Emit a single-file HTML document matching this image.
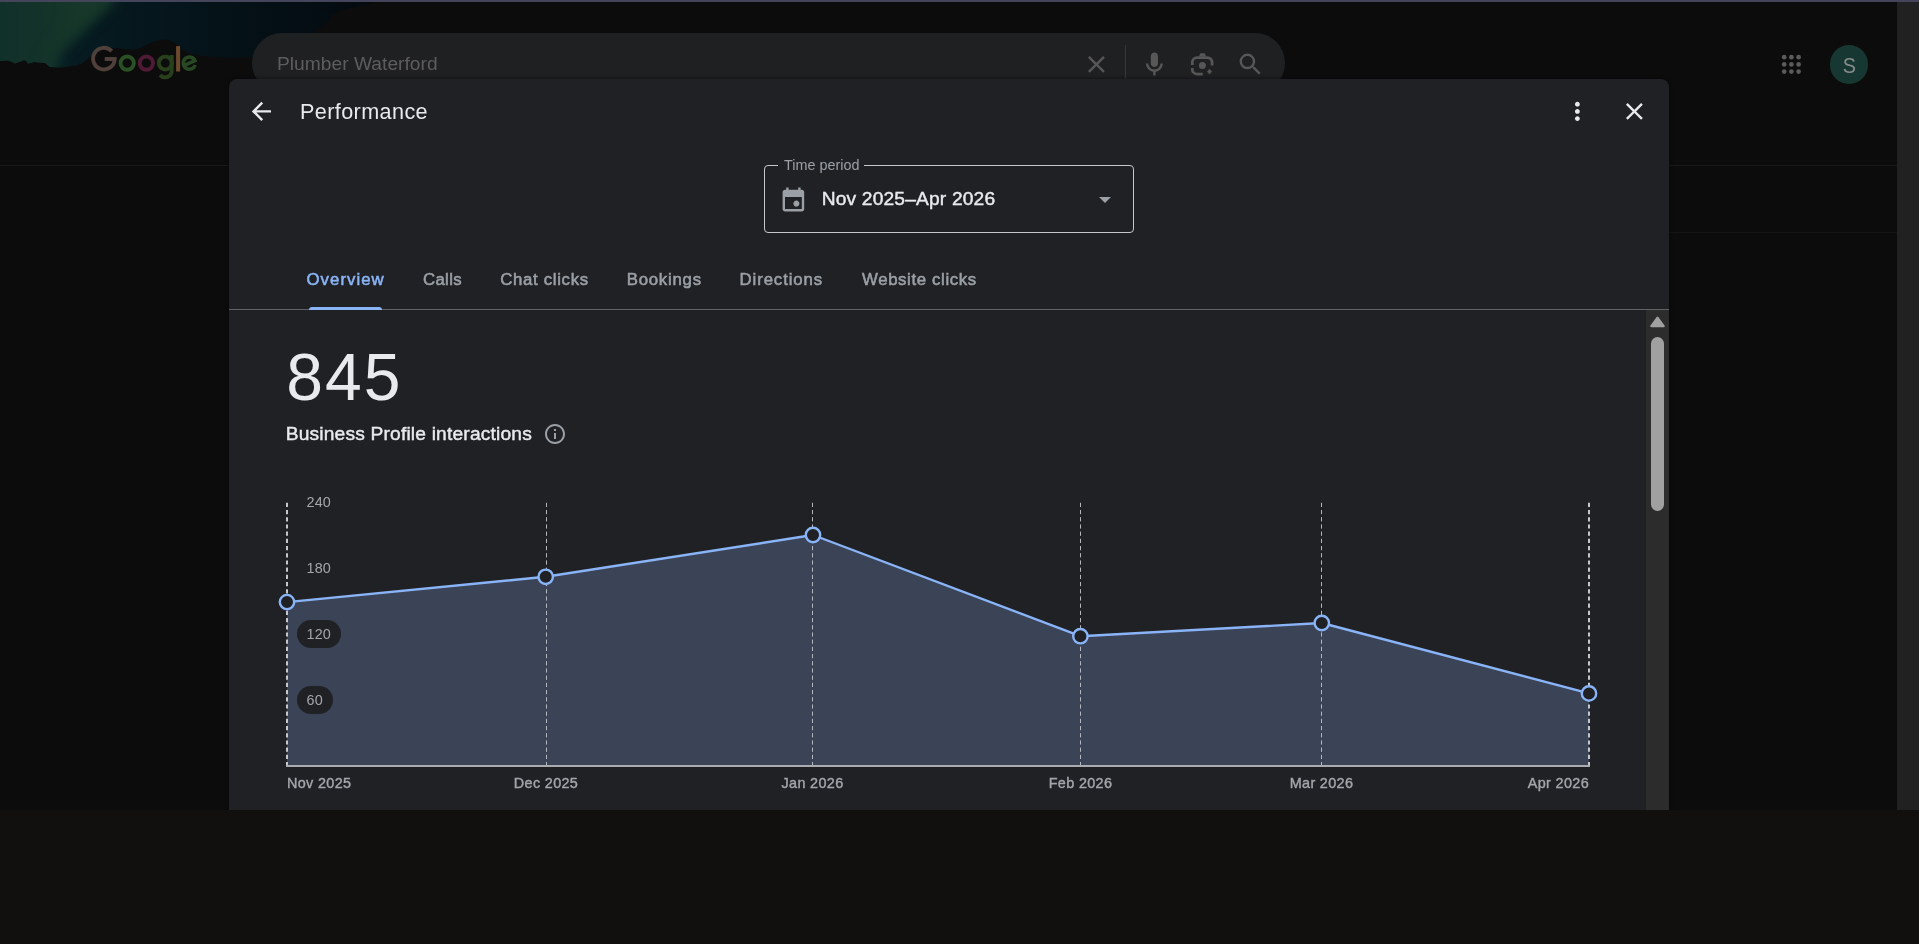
<!DOCTYPE html>
<html>
<head>
<meta charset="utf-8">
<title>Performance</title>
<style>
*{box-sizing:border-box;margin:0;padding:0}
html,body{width:1919px;height:944px;overflow:hidden;background:#0c0c0c;font-family:"Liberation Sans",sans-serif;}
.abs{position:absolute}
#page{will-change:transform;position:absolute;left:0;top:0;width:1919px;height:944px;overflow:hidden;background:#0c0c0c}
#topline{left:0;top:0;width:1919px;height:2px;background:#44455a}
#bottom{z-index:5;left:0;top:810px;width:1919px;height:134px;background:#11100e}
#vscroll{left:1897px;top:2px;width:22px;height:808px;background:#212121}
.hline{height:1px;background:#191919}
#search{left:252px;top:33px;width:1033px;height:60px;border-radius:30px;background:#1f2022}
#stext{left:277px;letter-spacing:0.020px;top:51.600px;font-size:19.200px;line-height:24px;color:#5d5d5d;white-space:nowrap}
#sdiv{left:1125px;top:45px;width:1px;height:35px;background:#37383b}
#avatar{left:1829.800px;top:45.200px;width:38.400px;height:38.400px;border-radius:50%;background:#173832;color:#868b89;font-size:22px;line-height:41px;text-align:center;transform-origin:50% 50%}
#modal{left:229px;top:79px;width:1440px;height:731px;background:#202124;border-radius:8px 8px 0 0;overflow:hidden;box-shadow:0 0 4px rgba(0,0,0,0.550)}
#title{left:71px;letter-spacing:0.400px;top:20px;font-size:21.600px;line-height:26px;color:#e8eaed;white-space:nowrap}
#tp{left:535px;top:86px;width:370px;height:68px;border:1px solid #c4c7cc;border-radius:4px}
#tplabel{left:549px;top:77.500px;padding:0 5px 0 6px;background:#202124;font-size:14.400px;line-height:16px;letter-spacing:0;color:#9aa0a6;white-space:nowrap}
#tptext{left:592.700px;top:107.500px;font-size:19.200px;line-height:24px;color:#e8eaed;-webkit-text-stroke:0.450px #e8eaed;letter-spacing:0.170px;white-space:nowrap}
.tab{top:191px;font-size:16.800px;line-height:20px;color:#9aa0a6;-webkit-text-stroke:0.550px #9aa0a6;white-space:nowrap}
#tabline{left:0;top:230px;width:1440px;height:1px;background:#5f6368}
#tabind{left:79.700px;top:228px;width:73.400px;height:3px;background:#8ab4f8;border-radius:3px 3px 0 0}
#mtrack{left:1417px;top:231px;width:23px;height:500px;background:#2c2c2c}
#mthumb{left:1422px;top:258px;width:13px;height:174px;border-radius:6.5px;background:#a0a0a0}
#big{left:57.300px;letter-spacing:2px;top:262px;font-size:66px;line-height:72px;color:#e8eaed;white-space:nowrap}
#bpi{left:56.700px;letter-spacing:0.180px;top:343px;font-size:19.200px;line-height:24px;color:#e8eaed;-webkit-text-stroke:0.450px #e8eaed;white-space:nowrap}
svg{position:absolute;overflow:visible}
</style>
</head>
<body>
<div id="page">
  <!-- aurora doodle background (top-left) -->
  <svg id="aurora" class="abs" style="left:0;top:2px" width="380" height="80" viewBox="0 2 380 80">
    <defs>
      <linearGradient id="navy" gradientUnits="userSpaceOnUse" x1="40" y1="0" x2="380" y2="0">
        <stop offset="0" stop-color="#082026"/>
        <stop offset="0.12" stop-color="#061b21"/>
        <stop offset="0.35" stop-color="#05161c"/>
        <stop offset="0.65" stop-color="#041016"/>
        <stop offset="0.88" stop-color="#040c11"/>
        <stop offset="1" stop-color="#05090c"/>
      </linearGradient>
      <linearGradient id="grn" gradientUnits="userSpaceOnUse" x1="0" y1="0" x2="110" y2="0">
        <stop offset="0" stop-color="#10302a"/>
        <stop offset="0.45" stop-color="#14342a"/>
        <stop offset="1" stop-color="#18392b"/>
      </linearGradient>
      <filter id="bl" color-interpolation-filters="sRGB" filterUnits="userSpaceOnUse" x="-60" y="-60" width="520" height="220"><feGaussianBlur stdDeviation="6"/></filter>
      <filter id="bl2" color-interpolation-filters="sRGB" filterUnits="userSpaceOnUse" x="-60" y="-60" width="520" height="220"><feGaussianBlur stdDeviation="7"/></filter>
      <clipPath id="skyclip"><polygon points="0,2 378,2 365,5 354,7.500 343,10 333,14.500 329,20 325,25 318,29 312.500,33.500 303,39 291.700,45 281,49 271,52 260,55.500 250,57.300 244,57 234,58 223.600,57.600 212,56.500 200.500,55.600 193,54 187,52.200 181,47.500 176,43.400 170,40.500 165.300,39.300 158,40.500 149,43.400 142,47.500 135.500,49.500 126,49.200 116.500,48 106,49 98,51.500 91.500,55 87.700,59 82,63.300 76,65.500 68,66.800 61,67.500 49.600,67 47,64.500 45,63 39,62.500 34,62 31,63 28,63.500 26,61 24.400,60 20,61.800 15,63.400 11,61.500 7.600,60.500 3,61 0,61"/></clipPath>
    </defs>
    <g clip-path="url(#skyclip)">
      <rect x="0" y="0" width="380" height="82" fill="url(#navy)"/>
      <polygon points="-30,-30 115,-30 115,2 96,20 75,40 60,55 57,70 57,100 -30,100" fill="url(#grn)" filter="url(#bl)"/>
      <polygon points="70,-10 108,-10 100,8 86,22 66,42 53,57 50,75 38,75 42,57 52,40 66,20" fill="#1b3d2c" opacity="0.250" filter="url(#bl2)"/>
    </g>
  </svg>
  <div id="topline" class="abs"></div>
  <div class="abs hline" style="left:0;top:165px;width:1897px"></div>
  <div class="abs hline" style="left:1669px;top:232px;width:228px;background:#151515"></div>
  <div id="vscroll" class="abs"></div>
  <div id="bottom" class="abs"></div>

  <!-- Google logo -->
  <svg id="logo" class="abs" style="left:0;top:0" width="260" height="100" viewBox="0 0 260 100" fill="none" stroke-width="3.900"><path d="M111.70 51.06 A10.85 10.85 0 1 0 114.75 59.00 H104.70" stroke="#4f403b" /><circle cx="127.200" cy="63.100" r="6.650" stroke="#2a5026"/><circle cx="146.400" cy="63.100" r="6.650" stroke="#4e1a34"/><circle cx="165.300" cy="63.100" r="6.500" stroke="#28411c"/><path d="M171.700 54.900 V70.700 A6.600 6.600 0 0 1 160.04 74.94" stroke="#28411c"/><path d="M178.100 46.100 V71.500" stroke="#6d4a2e" stroke-width="4"/><path d="M183.30 63.10 H195.50 A6.1 6.1 0 1 0 193.93 67.18" stroke="#284823" stroke-width="3.600" transform="rotate(-24 189.4 63.1)"/></svg>

  <!-- search box -->
  <div id="search" class="abs"></div>
  <div id="stext" class="abs">Plumber Waterford</div>
  <div id="sdiv" class="abs"></div>
  <svg class="abs" style="left:1081.950px;top:49.600px" width="28.800" height="28.800" viewBox="0 0 24 24" fill="#575757"><path d="M19 6.410L17.590 5 12 10.590 6.410 5 5 6.410 10.590 12 5 17.590 6.410 19 12 13.410 17.590 19 19 17.590 13.410 12z"/></svg>
  <svg class="abs" style="left:1139.800px;top:48.900px" width="28.800" height="28.800" viewBox="0 0 24 24" fill="#575757"><path d="M12 15c1.660 0 3-1.340 3-3V6c0-1.660-1.340-3-3-3S9 4.340 9 6v6c0 1.660 1.340 3 3 3z"/><path d="M17 12c0 2.760-2.240 5-5 5s-5-2.240-5-5H5c0 3.530 2.610 6.430 6 6.920V22h2v-3.080c3.390-.490 6-3.390 6-6.920h-2z"/></svg>
  <svg class="abs" style="left:1180px;top:44px" width="44" height="40" viewBox="1180 44 44 40" fill="#565656"><path d="M1192.300 65 V62.300 A4.800 4.800 0 0 1 1197.100 57.500 H1207.300 A4.800 4.800 0 0 1 1212.100 62.300 V65.600" fill="none" stroke="#565656" stroke-width="2.750"/><path d="M1192.300 68 V69.200 A4.800 4.800 0 0 0 1197.100 74 H1202.700" fill="none" stroke="#565656" stroke-width="2.750"/><path d="M1198.900 56.400 L1200.300 53.200 H1204.800 L1206.100 56.400z"/><circle cx="1202.400" cy="65.600" r="3.500"/><path d="M1209.500 69.300 L1211.800 71.600 L1209.500 73.900 L1207.200 71.600z" stroke="#565656" stroke-width="0.500" stroke-linejoin="round"/></svg>
  <svg class="abs" style="left:1235.700px;top:49.600px" width="28.800" height="28.800" viewBox="0 0 24 24" fill="#575757"><path d="M15.5 14h-.79l-.28-.27A6.471 6.471 0 0 0 16 9.5 6.5 6.5 0 1 0 9.5 16c1.61 0 3.09-.59 4.23-1.57l.27.28v.79l5 4.99L20.490 19l-4.99-5zm-6 0C7.010 14 5 11.990 5 9.5S7.010 5 9.500 5 14 7.010 14 9.500 11.990 14 9.500 14z"/></svg>

  <!-- apps + avatar -->
  <svg class="abs" style="left:1779px;top:52px" width="24" height="24" viewBox="0 0 24 24" fill="#5b5b5b"><circle cx="5.2" cy="5.2" r="2.350"/><circle cx="12.4" cy="5.2" r="2.350"/><circle cx="19.6" cy="5.2" r="2.350"/><circle cx="5.2" cy="12.4" r="2.350"/><circle cx="12.4" cy="12.4" r="2.350"/><circle cx="19.6" cy="12.4" r="2.350"/><circle cx="5.2" cy="19.6" r="2.350"/><circle cx="12.4" cy="19.6" r="2.350"/><circle cx="19.6" cy="19.6" r="2.350"/></svg>
  <div id="avatar" class="abs"><span style="display:inline-block;transform:scaleX(0.900)">S</span></div>

  <!-- modal -->
  <div id="modal" class="abs">
    <svg class="abs" style="left:18.200px;top:18.100px" width="28.800" height="28.800" viewBox="0 0 24 24"><path d="M20 11H7.830l5.590-5.590L12 4l-8 8 8 8 1.410-1.410L7.830 13H20v-2z" fill="#e8eaed"/></svg>
    <div id="title" class="abs">Performance</div>
    <svg class="abs" style="left:1333.900px;top:17.700px" width="28.800" height="28.800" viewBox="0 0 24 24" fill="#e8eaed"><path d="M12 8c1.100 0 2-.9 2-2s-.9-2-2-2-2 .9-2 2 .9 2 2 2zm0 2c-1.100 0-2 .9-2 2s.9 2 2 2 2-.9 2-2-.9-2-2-2zm0 6c-1.100 0-2 .9-2 2s.9 2 2 2 2-.9 2-2-.9-2-2-2z"/></svg>
    <svg class="abs" style="left:1390.800px;top:17.800px" width="28.800" height="28.800" viewBox="0 0 24 24" fill="#e8eaed"><path d="M19 6.410L17.590 5 12 10.590 6.410 5 5 6.410 10.590 12 5 17.590 6.410 19 12 13.410 17.590 19 19 17.590 13.410 12z"/></svg>

    <div id="tp" class="abs"></div>
    <div id="tplabel" class="abs">Time period</div>
    <svg class="abs" style="left:550.050px;top:106.050px" width="28.800" height="28.800" viewBox="0 0 24 24" fill="#9aa0a6"><path d="M14.500 18q-1.050 0-1.775-.725T12 15.500q0-1.050.725-1.775T14.500 13q1.050 0 1.775.725T17 15.500q0 1.050-.725 1.775T14.500 18ZM5 22q-.825 0-1.413-.587Q3 20.825 3 20V6q0-.825.587-1.412Q4.175 4 5 4h1V2h2v2h8V2h2v2h1q.825 0 1.413.588Q21 5.175 21 6v14q0 .825-.587 1.413Q19.825 22 19 22Zm0-2h14V10H5v10Z"/></svg>
    <div id="tptext" class="abs">Nov 2025–Apr 2026</div>
    <svg class="abs" style="left:870px;top:118px" width="12" height="6" viewBox="0 0 12 6"><path d="M0 0h12l-6 6z" fill="#9aa0a6"/></svg>

    <div id="t1" class="abs tab" style="left:77.500px;letter-spacing:1.040px;color:#8ab4f8;-webkit-text-stroke-color:#8ab4f8">Overview</div>
    <div id="t2" class="abs tab" style="left:194.000px;letter-spacing:0.330px">Calls</div>
    <div id="t3" class="abs tab" style="left:271.300px;letter-spacing:0.670px">Chat clicks</div>
    <div id="t4" class="abs tab" style="left:397.700px;letter-spacing:0.770px">Bookings</div>
    <div id="t5" class="abs tab" style="left:510.500px;letter-spacing:0.900px">Directions</div>
    <div id="t6" class="abs tab" style="left:633.000px;letter-spacing:0.630px">Website clicks</div>
    <div id="tabline" class="abs"></div>
    <div id="tabind" class="abs"></div>

    <div id="mtrack" class="abs"></div>
    <svg class="abs" style="left:1421px;top:237px" width="15" height="12" viewBox="0 0 15 12"><path d="M7.500 1.700 L13.700 10.100 H1.300z" fill="#a0a0a0" stroke="#a0a0a0" stroke-width="2.200" stroke-linejoin="round"/></svg>
    <div id="mthumb" class="abs"></div>

    <div id="big" class="abs">845</div>
    <div id="bpi" class="abs">Business Profile interactions</div>
    <svg class="abs" style="left:314px;top:343px" width="24" height="24" viewBox="0 0 24 24" fill="#9aa0a6"><path d="M11 7h2v2h-2zm0 4h2v6h-2zm1-9C6.480 2 2 6.480 2 12s4.480 10 10 10 10-4.480 10-10S17.520 2 12 2zm0 18c-4.410 0-8-3.590-8-8s3.590-8 8-8 8 3.590 8 8-3.590 8-8 8z"/></svg>

    <!-- chart: svg coords = page coords shifted by modal origin (229,79) -->
    <svg id="chart" class="abs" style="left:0;top:0" width="1440" height="731" viewBox="229 79 1440 731">
      <polygon points="287,602.100 545.700,576.800 813,535 1080.400,636.200 1321.800,623 1589,693.400 1589,766 287,766" fill="#3b4357"/>
      <g stroke="#b4b7bc" stroke-width="1" stroke-dasharray="4.200 3">
        <line x1="546.500" y1="502.800" x2="546.500" y2="765"/>
        <line x1="812.500" y1="502.800" x2="812.500" y2="765"/>
        <line x1="1080.500" y1="502.800" x2="1080.500" y2="765"/>
        <line x1="1321.500" y1="502.800" x2="1321.500" y2="765"/>
      </g>
      <g stroke="#c4c7cc" stroke-width="2" stroke-dasharray="4.200 3">
        <line x1="287" y1="502.800" x2="287" y2="765"/>
        <line x1="1589" y1="502.800" x2="1589" y2="765"/>
      </g>
      <line x1="286" y1="766" x2="1590" y2="766" stroke="#a9abaf" stroke-width="2"/>
      <polyline points="287,602.100 545.700,576.800 813,535 1080.400,636.200 1321.800,623 1589,693.400" fill="none" stroke="#8ab4f8" stroke-width="2.400" stroke-linejoin="round"/>
      <g fill="#202124" stroke="#8ab4f8" stroke-width="2.400">
        <circle cx="287" cy="602.100" r="7.200"/>
        <circle cx="545.700" cy="576.800" r="7.200"/>
        <circle cx="813" cy="535" r="7.200"/>
        <circle cx="1080.400" cy="636.200" r="7.200"/>
        <circle cx="1321.800" cy="623" r="7.200"/>
        <circle cx="1589" cy="693.400" r="7.200"/>
      </g>
      <rect x="297" y="620" width="44" height="28" rx="14" fill="#202124"/>
      <rect x="297" y="686" width="36" height="28" rx="14" fill="#202124"/>
      <g font-family="Liberation Sans, sans-serif" font-size="14.400" fill="#a3a6ab" letter-spacing="0.150">
        <text x="306.500" y="507">240</text>
        <text x="306.500" y="573">180</text>
        <text x="306.500" y="639">120</text>
        <text x="306.500" y="705">60</text>
      </g>
      <g font-family="Liberation Sans, sans-serif" font-size="14.400" fill="#a3a6ab" stroke="#a3a6ab" stroke-width="0.400" letter-spacing="0.350">
        <text x="287" y="788">Nov 2025</text>
        <text x="546" y="788" text-anchor="middle">Dec 2025</text>
        <text x="812.500" y="788" text-anchor="middle">Jan 2026</text>
        <text x="1080.500" y="788" text-anchor="middle">Feb 2026</text>
        <text x="1321.500" y="788" text-anchor="middle">Mar 2026</text>
        <text x="1589" y="788" text-anchor="end">Apr 2026</text>
      </g>
    </svg>
  </div>
</div>
</body>
</html>
